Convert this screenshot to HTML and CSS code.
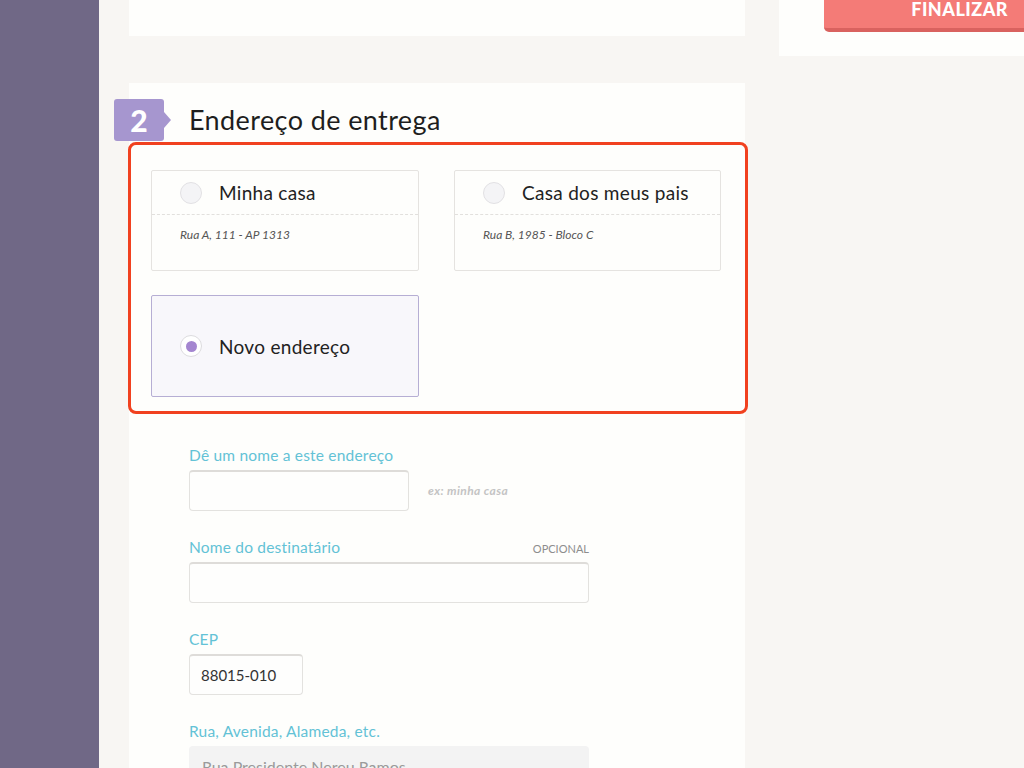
FILE: index.html
```html
<!DOCTYPE html>
<html lang="pt-BR">
<head>
  <meta charset="UTF-8">
  <title>Endereço de entrega</title>
  <link rel="stylesheet" href="styles.css">
</head>
<body>
  <div class="sidebar"></div>

  <div class="page">
    <div class="col-main">
      <div class="card card-top"></div>

      <div class="card card-address">
        <div class="step-head">
          <div class="step-badge">2</div>
          <h2>Endereço de entrega</h2>
        </div>

        <div class="highlight">
          <div class="options">
            <label class="option">
              <div class="option-head">
                <span class="radio"></span>
                <span class="option-name">Minha casa</span>
              </div>
              <div class="option-addr">Rua A, 111 - AP 1313</div>
            </label>
            <label class="option">
              <div class="option-head">
                <span class="radio"></span>
                <span class="option-name">Casa dos meus pais</span>
              </div>
              <div class="option-addr">Rua B, 1985 - Bloco C</div>
            </label>
            <label class="option option-new selected">
              <div class="option-head">
                <span class="radio"></span>
                <span class="option-name">Novo endereço</span>
              </div>
            </label>
          </div>
        </div>

        <form class="address-form">
          <div class="field">
            <label class="field-label" for="apelido">Dê um nome a este endereço</label>
            <div class="field-row">
              <input type="text" id="apelido" class="input input-md">
              <span class="hint">ex: minha casa</span>
            </div>
          </div>
          <div class="field">
            <div class="label-row">
              <label class="field-label" for="destinatario">Nome do destinatário</label>
              <span class="optional">OPCIONAL</span>
            </div>
            <input type="text" id="destinatario" class="input input-lg">
          </div>
          <div class="field">
            <label class="field-label" for="cep">CEP</label>
            <input type="text" id="cep" class="input input-sm" value="88015-010">
          </div>
          <div class="field">
            <label class="field-label" for="rua">Rua, Avenida, Alameda, etc.</label>
            <input type="text" id="rua" class="input input-lg" value="Rua Presidente Nereu Ramos" disabled>
          </div>
        </form>
      </div>
    </div>

    <div class="col-side">
      <div class="card card-summary">
        <button type="button" class="btn-finish">FINALIZAR</button>
      </div>
    </div>
  </div>
</body>
</html>
```

FILE: styles.css
```css
html, body {
  margin: 0;
  height: 768px;
  overflow: hidden;
}
body {
  display: flex;
  font-family: 'Lato', 'Open Sans', sans-serif;
  background: #f8f6f3;
  color: #222;
}
.sidebar {
  width: 99px;
  flex-shrink: 0;
  background: #706886;
}
.page {
  display: flex;
  gap: 34px;
  padding-left: 30px;
  flex: 1;
}
.col-main {
  width: 616px;
}
.col-side {
  flex: 1;
}
.card {
  background: #fefefc;
}
.card-top {
  height: 36px;
  margin-bottom: 47px;
}
.card-summary {
  display: flow-root;
  height: 56px;
  padding-left: 45px;
}
.btn-finish {
  display: block;
  width: 100%;
  height: 33px;
  margin-top: -1px;
  padding: 0 16px 9px 0;
  text-align: right;
  background: #f47b77;
  color: #fff;
  font-family: 'Lato', sans-serif;
  font-weight: 900;
  font-size: 18px;
  line-height: 16px;
  letter-spacing: 0.5px;
  border: none;
  border-bottom: 4px solid #d9625f;
  border-radius: 0 0 0 5px;
  overflow: hidden;
}

/* endereço */
.card-address {
  height: 685px;
  padding-top: 16px;
  box-sizing: border-box;
}
.step-head {
  display: flex;
  align-items: flex-start;
  margin-left: -15px;
  height: 43px;
}
.step-badge {
  position: relative;
  width: 50px;
  height: 42px;
  line-height: 42px;
  background: #a696cf;
  border-radius: 3px;
  color: #fff;
  font-family: 'Lato', sans-serif;
  font-weight: 900;
  font-size: 30px;
  text-align: center;
}
.step-badge::after {
  content: "";
  position: absolute;
  right: -7px;
  top: 13px;
  border-top: 8px solid transparent;
  border-bottom: 8px solid transparent;
  border-left: 7px solid #a696cf;
}
.step-head h2 {
  margin: 0 0 0 25px;
  font-weight: 400;
  font-size: 27px;
  letter-spacing: 0.4px;
  line-height: 42px;
  color: #1e1e1e;
}

.highlight {
  margin-left: -1px;
  width: 620px;
  box-sizing: border-box;
  border: 3px solid #f1411f;
  border-radius: 8px;
  padding: 25px 24px 14px 20px;
}
.options {
  display: grid;
  grid-template-columns: 268px 267px;
  column-gap: 35px;
  row-gap: 24px;
}
.option {
  display: block;
  height: 101px;
  box-sizing: border-box;
  border: 1px solid #e5e3e0;
  border-radius: 2px;
  background: #fefefc;
}
.option-head {
  display: flex;
  align-items: center;
  gap: 17px;
  height: 43px;
  padding-left: 28px;
  border-bottom: 1px dashed #e2e0dd;
}
.radio {
  width: 20px;
  height: 20px;
  border: 1px solid #e2e1e4;
  border-radius: 50%;
  background: #f4f4f6;
  display: flex;
  align-items: center;
  justify-content: center;
}
.option-name {
  font-size: 19px;
  letter-spacing: 0.3px;
  color: #222;
}
.option-addr {
  padding: 12px 0 0 28px;
  font-size: 12px;
  font-style: italic;
  color: #555;
}
.option-new {
  height: 102px;
  background: #f8f7fb;
  border-color: #b6aed4;
  display: flex;
  align-items: center;
}
.option-new .option-head {
  border-bottom: none;
}
.selected .radio {
  background: #fff;
  border-color: #dddcdf;
}
.selected .radio::after {
  content: "";
  width: 11px;
  height: 11px;
  border-radius: 50%;
  background: #a486d0;
}

/* formulário */
.address-form {
  padding: 32px 0 0 60px;
}
.field {
  margin-bottom: 27px;
}
.field-label {
  display: block;
  font-size: 15.5px;
  letter-spacing: 0.2px;
  line-height: 18px;
  color: #63c2d6;
  margin-bottom: 6px;
}
.label-row {
  display: flex;
  justify-content: space-between;
  align-items: baseline;
  width: 400px;
}
.optional {
  font-size: 11px;
  color: #8d8d8d;
}
.field-row {
  display: flex;
  align-items: center;
  gap: 19px;
}
.hint {
  font-size: 12px;
  letter-spacing: 0.4px;
  font-style: italic;
  font-weight: 700;
  color: #c4c4c4;
}
.input {
  display: block;
  box-sizing: border-box;
  height: 41px;
  border: 1px solid #e3e2df;
  border-top: 2px solid #dedcd9;
  border-radius: 4px;
  background: #fefefd;
  padding: 0 11px;
  font-family: 'Lato', sans-serif;
  font-size: 15px;
  color: #333;
}
.input-sm { width: 114px; }
.input-md { width: 220px; }
.input-lg { width: 400px; }
.input:disabled {
  background: #f3f3f3;
  border: none;
  color: #9a9a9a;
  padding-left: 13px;
  font-size: 16px;
}
```
